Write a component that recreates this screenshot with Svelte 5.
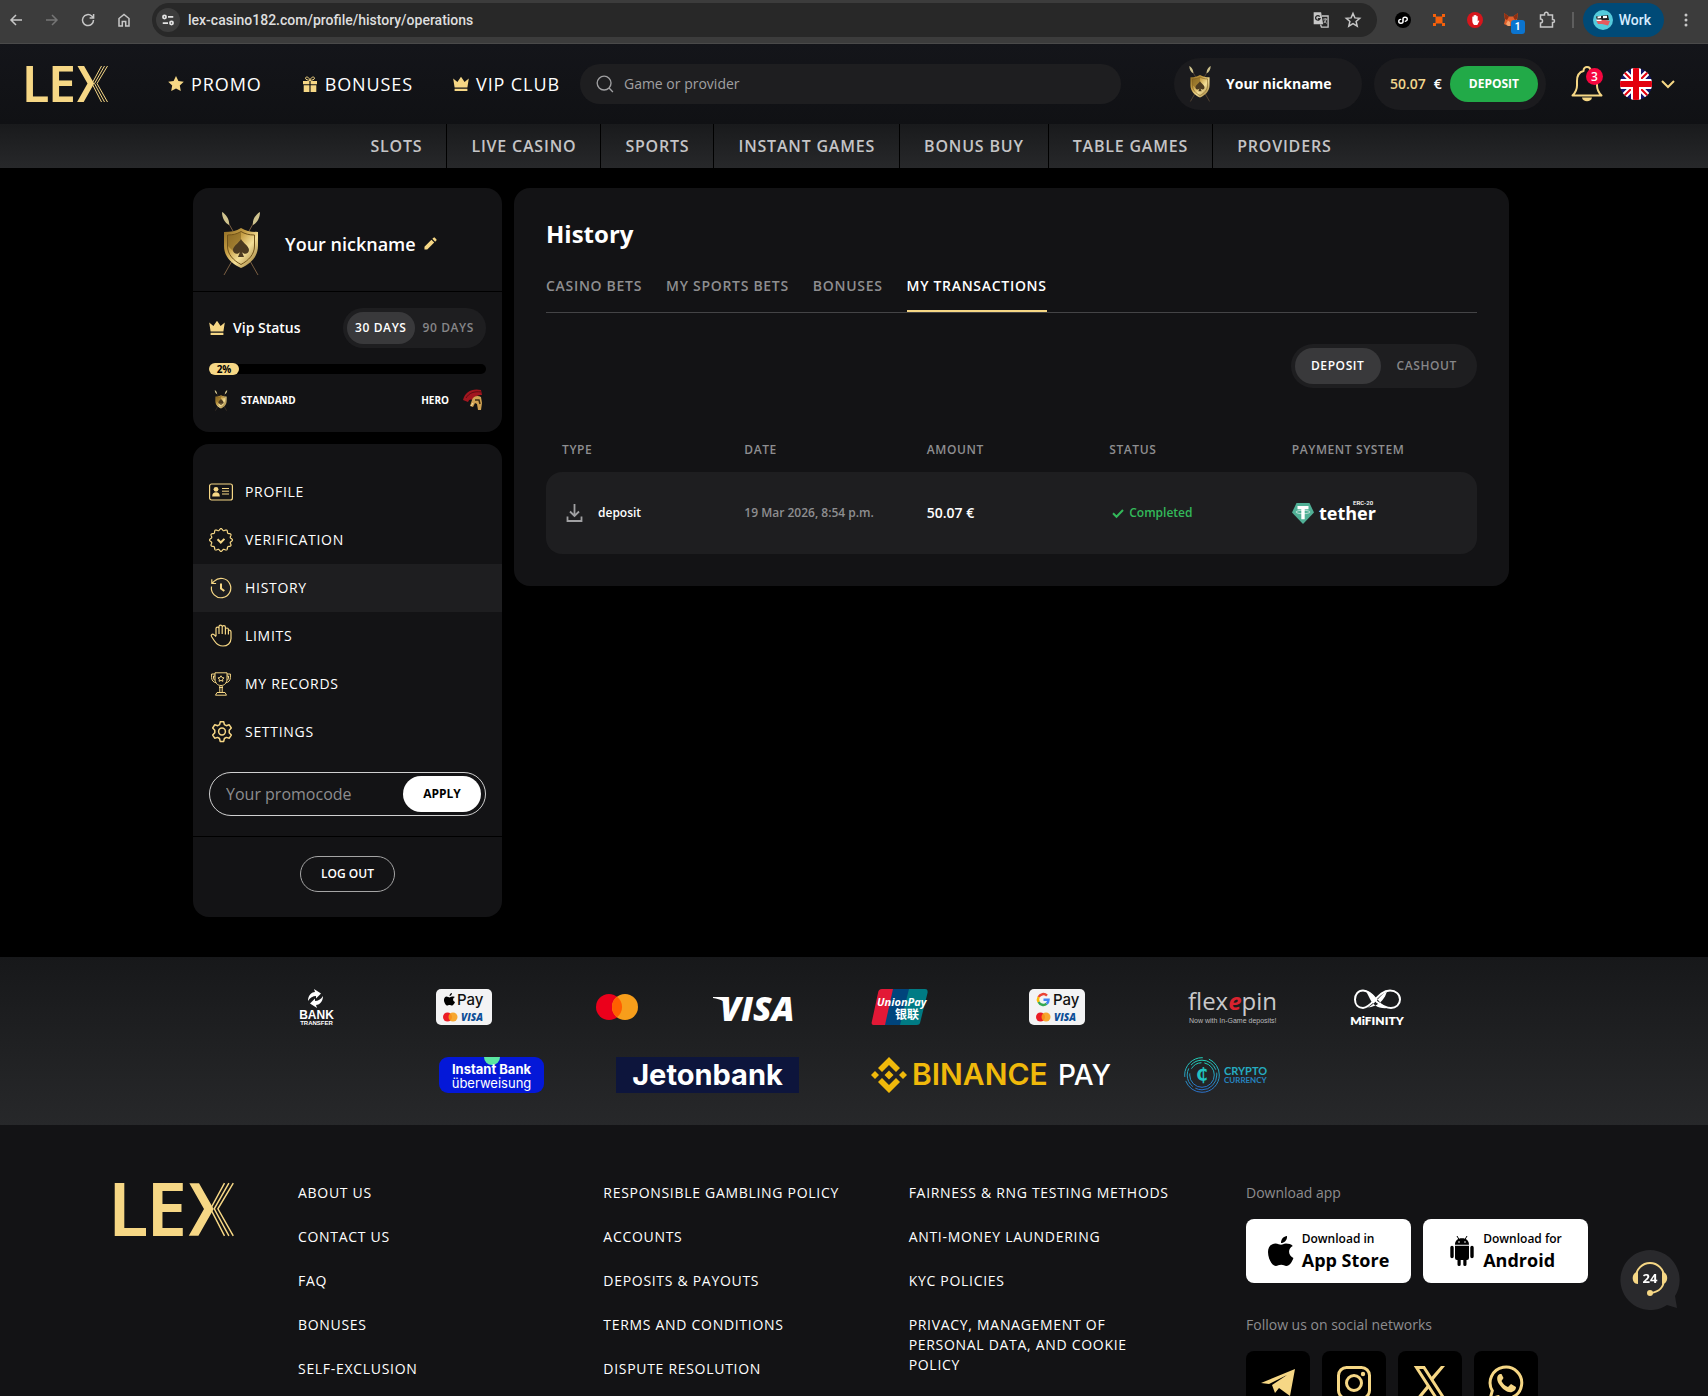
<script>
  const topLinks = [
    { icon: 'star', label: 'PROMO' },
    { icon: 'gift', label: 'BONUSES' },
    { icon: 'crown', label: 'VIP CLUB' }
  ];
  const categories = ['SLOTS', 'LIVE CASINO', 'SPORTS', 'INSTANT GAMES', 'BONUS BUY', 'TABLE GAMES', 'PROVIDERS'];
  const menu = [
    { icon: 'card', label: 'PROFILE' },
    { icon: 'badge', label: 'VERIFICATION' },
    { icon: 'history', label: 'HISTORY' },
    { icon: 'hand', label: 'LIMITS' },
    { icon: 'trophy', label: 'MY RECORDS' },
    { icon: 'gear', label: 'SETTINGS' }
  ];
  const tabs = ['CASINO BETS', 'MY SPORTS BETS', 'BONUSES', 'MY TRANSACTIONS'];
  const footerLinks = [
    ['ABOUT US', 'CONTACT US', 'FAQ', 'BONUSES', 'SELF-EXCLUSION'],
    ['RESPONSIBLE GAMBLING POLICY', 'ACCOUNTS', 'DEPOSITS & PAYOUTS', 'TERMS AND CONDITIONS', 'DISPUTE RESOLUTION'],
    ['FAIRNESS & RNG TESTING METHODS', 'ANTI-MONEY LAUNDERING', 'KYC POLICIES', 'PRIVACY, MANAGEMENT OF PERSONAL DATA, AND COOKIE POLICY']
  ];
  let page = $state('HISTORY');
  let tab = $state('MY TRANSACTIONS');
  let period = $state('30 DAYS');
  let kind = $state('DEPOSIT');
  let vipProgress = $state(2);

  // Scalloped outline of the verification badge.
  function wave(cx, cy, r, depth, lobes) {
    const pts = [];
    for (let i = 0; i <= 180; i++) {
      const a = (i / 180) * Math.PI * 2;
      const rr = r + depth * Math.cos(a * lobes + Math.PI);
      pts.push((cx + rr * Math.sin(a)).toFixed(2) + ' ' + (cy - rr * Math.cos(a)).toFixed(2));
    }
    return 'M' + pts.join('L') + 'Z';
  }
  const badgePath = wave(12, 12, 10.5, -0.9, 12);
</script>

{#snippet logo(cls)}
  <svg class={cls} viewBox="0 0 82 36" role="img" aria-label="LEX">
    <text x="-4" y="36" class="logo-text">L</text>
    <text x="22" y="36" class="logo-text">E</text>
    <path class="gold" d="M51.500 0h6.600l10 17.600-10.400 18.400h-6.600l10.400-18.400z" />
    <g class="gold-line">
      <path d="M75.500 0 66 17.500 75.500 36" />
      <path d="M78.500 0 68.500 17.500 78.500 36" />
      <path d="M81.500 0 71 17.500 81.500 36" />
    </g>
  </svg>
{/snippet}

{#snippet shield(cls)}
  <svg class={cls} viewBox="0 0 40 64" aria-hidden="true">
    <defs>
      <linearGradient id="shieldGold" x1="0" y1="0" x2="1" y2="1">
        <stop offset="0" stop-color="#8d6a22" />
        <stop offset="0.35" stop-color="#c79f45" />
        <stop offset="0.6" stop-color="#f4df98" />
        <stop offset="1" stop-color="#8a6722" />
      </linearGradient>
    </defs>
    <path d="M4 5 37 63M36 5 3 63" stroke="#7a5f42" stroke-width="1" />
    <path d="M1 0c4 2 8 8 7 13C4 11 1 6 1 0zM39 0c-4 2-8 8-7 13 4-2 7-7 7-13z" fill="#cfc38e" />
    <path d="M20 16c5 3 10 4 17 4v14c0 11-8 18-17 22C11 52 3 45 3 34V20c7 0 12-1 17-4z" fill="url(#shieldGold)" />
    <path d="M20 19.500c4 2.500 8 3.500 13.500 3.500v11c0 8.500-6 14.500-13.500 18.500C12.500 48.500 6.500 42.500 6.500 34V23c5.500 0 9.500-1 13.500-3.500z" fill="none" stroke="#6f5119" stroke-width="1" />
    <path d="M20 20v9l-7 11-6-6V23c5 0 9-1 13-3z" fill="#7c5c1c" opacity="0.550" />
    <path d="M20 27c2 4 8 7 8 11 0 4-5 5-7 2l2 5h-6l2-5c-2 3-7 2-7-2 0-4 6-7 8-11z" fill="#4c3a20" />
  </svg>
{/snippet}

{#snippet icon(name)}
  {#if name === 'star'}
    <svg class="ic16" viewBox="0 0 16 16" aria-hidden="true"><path class="gold" d="m8 0 2.400 5 5.400.700-4 3.900 1 5.500L8 12.500 3.200 15.100l1-5.500-4-3.900L5.600 5z" /></svg>
  {:else if name === 'gift'}
    <svg class="ic16" viewBox="0 0 16 16" aria-hidden="true"><path class="gold" d="M1 5h6.400v3.300H1zM8.600 5H15v3.300H8.600zM1.700 9.200h5.700V16H1.700zM8.600 9.200h5.700V16H8.600z" /><path class="gold-line" d="M8 4.500C6 4 3.500 3.800 3.500 2.200 3.500.500 7 .300 8 4.500c1-4.200 4.500-4 4.500-2.300C12.500 3.800 10 4 8 4.500z" /></svg>
  {:else if name === 'crown'}
    <svg class="ic16" viewBox="0 0 16 16" aria-hidden="true"><path class="gold" d="M.200 2.600 4.400 6 8 .800 11.600 6l4.200-3.400-1.400 8.800H1.600zM1.600 12.700h12.800V15H1.600z" /></svg>
  {:else if name === 'card'}
    <svg class="ic24" viewBox="0 0 24 24" aria-hidden="true"><rect class="gold-line menu-line" x=".600" y="4" width="22.800" height="16" rx="2" /><circle class="gold" cx="7" cy="9.300" r="2.400" /><path class="gold" d="M3.200 16.500c0-3 1.500-4.300 3.800-4.300s3.800 1.300 3.800 4.300z" /><path class="gold-line" d="M13 8.500h7M13 11.200h7M13 14h7" /></svg>
  {:else if name === 'badge'}
    <svg class="ic24" viewBox="0 0 24 24" aria-hidden="true"><path class="gold-line menu-line" d={badgePath} /><path class="gold-line thick" d="m8.500 11.200 3.300 3.300 3.600-3.600" /></svg>
  {:else if name === 'history'}
    <svg class="ic24" viewBox="0 0 24 24" aria-hidden="true"><path class="gold-line menu-line" d="M2.500 10.500a9.700 9.700 0 1 0 2.800-5.400L3 7.300M2.800 3.200v4.300h4.300" /><path class="gold-line thick" d="M12 7.500v5l3.300 2.500" /></svg>
  {:else if name === 'hand'}
    <svg class="ic24" viewBox="0 0 24 24" aria-hidden="true"><path class="gold-line menu-line" d="M7 12V4.600a1.500 1.500 0 0 1 3 0V10M10 10V2.800a1.500 1.500 0 0 1 3.200 0V10M13.200 10V3.200a1.500 1.500 0 0 1 3.200 0V10.500M16.400 10.500V5.500a1.500 1.500 0 0 1 3 0v5M19.400 6.500c1.600-.8 2.600.1 2.600 1.400v6.600c0 4.500-3.500 7.500-8 7.500-4 0-6.500-2-8.500-5l-3-4.500c-.9-1.500.9-3.200 2.500-1.800L7 12.700" /></svg>
  {:else if name === 'trophy'}
    <svg class="ic24" viewBox="0 0 24 24" aria-hidden="true"><path class="gold-line" d="M6 .800h12V7c0 4-2.500 6.500-6 6.500S6 11 6 7zM6 2H2.600v3.500c0 3 2 5 4.700 5.300M18 2h3.400v3.500c0 3-2 5-4.700 5.300M6 4H4.500v2c0 1 .7 2 1.700 2.400M18 4h1.500v2c0 1-.7 2-1.700 2.400M10.800 14v6.500M13.200 14v6.500M10 15.500h4M8 20.500h8l1.500 2.700h-11z" /><path class="gold-line" d="m12 3.800 1 1.800 2 .3-1.400 1.400.3 2-1.900-.9-1.900.9.300-2L9 5.900l2-.3z" /></svg>
  {:else if name === 'gear'}
    <svg class="ic24" viewBox="0 0 24 24" aria-hidden="true"><path class="gold-line gear" d="M11.300 1.700h3.400l.7 2.900 1.900 1.100 2.800-1 2.200 3.300-2.100 2.200v2.600l2.100 2.300-2 3.100-3-.8-1.900 1.100-.7 2.900h-3.500l-.7-2.900-1.900-1.100-2.900.8-2-3.100 2.100-2.300v-2.600L3.700 8l2.100-3.300 2.900 1 1.900-1.100z" /><circle class="gold-line gear" cx="13" cy="11.500" r="3.400" /></svg>
  {/if}
{/snippet}

<div class="window">
  <div class="browser">
    <button class="tool" aria-label="Back"><svg viewBox="0 0 16 16"><path d="M14 8H3M8 3 3 8l5 5" /></svg></button>
    <button class="tool dim" aria-label="Forward"><svg viewBox="0 0 16 16"><path d="M2 8h11M8 3l5 5-5 5" /></svg></button>
    <button class="tool" aria-label="Reload"><svg viewBox="0 0 16 16"><path d="M13.500 8A5.500 5.500 0 1 1 11.700 4l1.700 1.600M13.600 2v4h-4" /></svg></button>
    <button class="tool" aria-label="Home"><svg viewBox="0 0 16 16"><path d="M3 14V6.500l5-4 5 4V14H9.700V9.500H6.300V14z" /></svg></button>
    <div class="address">
      <span class="site"><svg viewBox="0 0 16 16" aria-hidden="true"><circle cx="4" cy="4.500" r="1.800" /><path d="M8 4.500h6M2 11.500h6" /><circle cx="12" cy="11.500" r="1.800" /></svg></span>
      <input aria-label="Address" value="lex-casino182.com/profile/history/operations" />
      <button class="tool" aria-label="Translate"><svg viewBox="0 0 18 18"><path fill="#c7c7c7" d="M1.500 1h7l2 12h-9z" /><path d="M10 4.500h7V17H9.500l-1-3" /><path class="cut" d="M7.500 5.200a2.500 2.500 0 1 0 .3 2.300H5.500" /><path class="fine" d="M11.500 8h4.500M13.700 7v1M15 8c-.5 2-1.500 3.500-3 4.500M12.500 9.500c.7 1.500 1.700 2.500 3 3.200" /></svg></button>
      <button class="tool" aria-label="Bookmark"><svg viewBox="0 0 16 16"><path d="m8 1.500 1.900 4.400 4.800.4-3.600 3.200 1.100 4.700L8 11.700l-4.200 2.500 1.100-4.700L1.300 6.300l4.800-.4z" /></svg></button>
    </div>
    <div class="extensions">
      <svg class="ext" viewBox="0 0 16 16" aria-hidden="true"><circle cx="8" cy="8" r="8" fill="#000" /><path d="M7.900 9.900V7.300q0-2 2-2h.4a1.900 1.900 0 0 1 0 3.900M8.100 6.700v2.600q0 2-2 2h-.4a1.900 1.900 0 0 1 0-3.900" fill="none" stroke="#fff" stroke-width="1.400" stroke-linecap="round" /></svg>
      <svg class="ext" viewBox="0 0 16 16" aria-hidden="true"><path d="M2 2h3v3H2zM11 2h3v3h-3zM2 11h3v3H2zM11 11h3v3h-3zM5 4.500h6l.5.500v6l-.5.500H5l-.5-.5V5z" fill="#f6600b" /></svg>
      <svg class="ext" viewBox="0 0 16 16" aria-hidden="true"><circle cx="8" cy="8" r="8" fill="#d6161c" /><path d="M5.300 9V4.800q.700-.8 1.300 0V3.500q.700-.8 1.400 0v-.2q.7-.8 1.400 0v1q.7-.7 1.300 0v5.200l.8-.9q.800-.3.800.5L10.300 13H7q-1.700-1.500-1.700-4z" fill="#fff" /></svg>
      <span class="fox">
        <svg class="ext" viewBox="0 0 16 16" aria-hidden="true"><path d="M1 1l5 3.500h4L15 1l-1 7 1 4-4 2H5l-4-2 1-4z" fill="#e2602c" /><path d="M1 1l5 3.500L4 8 2 7zM15 1l-5 3.500L12 8l2-1z" fill="#8d2f12" /><path d="M5 8.500 7 10v4H5l-2-2z" fill="#f4a46f" /></svg>
        <span class="count">1</span>
      </span>
      <svg class="ext line" viewBox="0 0 16 16" aria-hidden="true"><path d="M1.500 3h4V2a1.800 1.800 0 0 1 3.600 0v1H13.500v4.500h.5a1.500 1.500 0 0 1 0 3h-.5V15h-12v-4a2 2 0 0 0 0-4z" /></svg>
    </div>
    <span class="divider"></span>
    <button class="profile">
      <svg viewBox="0 0 20 20" aria-hidden="true"><circle cx="10" cy="10" r="10" fill="#54cbdc" /><path d="M3 6.500 15 5l1 5H4z" fill="#222" /><path d="M4.500 6.500 8 6v2l-3.500.500zM10 6l4-.3V8l-4 .3z" fill="#fff" /><path d="M3 10h9l5 1-2 4.500-6-1.500H5z" fill="#e65a5f" /><path d="M3.500 9.500h5V11h-5z" fill="#fff" /></svg>
      Work
    </button>
    <button class="tool dots" aria-label="Menu"><svg viewBox="0 0 16 16"><circle cx="8" cy="3" r="1.500" /><circle cx="8" cy="8" r="1.500" /><circle cx="8" cy="13" r="1.500" /></svg></button>
  </div>

  <header>
    <a class="home" href="#home">{@render logo('logo-small')}</a>
    <nav class="top-nav" aria-label="Main">
      {#each topLinks as l}
        <a href="#{l.icon}">{@render icon(l.icon)}{l.label}</a>
      {/each}
    </nav>
    <label class="search">
      <svg viewBox="0 0 20 20" aria-hidden="true"><circle cx="9" cy="9" r="7.700" /><path d="m14.500 14.500 4.300 4.300" /></svg>
      <input type="search" placeholder="Game or provider" aria-label="Search games" />
    </label>
    <a class="nick" href="#profile">{@render shield('shield-s')}Your nickname</a>
    <div class="balance">
      <span class="sum">50.07</span><span>€</span>
      <button>DEPOSIT</button>
    </div>
    <button class="bell" aria-label="Notifications">
      <svg viewBox="0 0 32 36" aria-hidden="true"><path class="gold-line bell-line" d="M1.500 29.500c3-3 4.500-5 4.500-10v-4.500C6 9.500 8.500 6 12.500 5c0-5.300 7-5.300 7 0C23.500 6 26 9.500 26 15v4.500c0 5 1.500 7 4.500 10z" /><path class="gold" d="M11 31.500h10c-.5 5-9.500 5-10 0z" /></svg>
      <span>3</span>
    </button>
    <button class="lang" aria-label="Language">
      <svg class="flag" viewBox="0 0 32 32" aria-hidden="true">
        <defs><clipPath id="round"><circle cx="16" cy="16" r="16" /></clipPath></defs>
        <g clip-path="url(#round)"><path fill="#13156b" d="M0 0h32v32H0z" /><path d="M0 0l32 32M32 0 0 32" stroke="#fff" stroke-width="6" /><path d="M0 0l32 32M32 0 0 32" stroke="#e3000f" stroke-width="2" /><path d="M16 0v32M0 16h32" stroke="#fff" stroke-width="10" /><path d="M16 0v32M0 16h32" stroke="#e3000f" stroke-width="6" /></g>
      </svg>
      <svg class="chev" viewBox="0 0 14 8" aria-hidden="true"><path class="gold-line thick" d="m1 1 6 6 6-6" /></svg>
    </button>
  </header>

  <nav class="categories" aria-label="Games">
    {#each categories as c}<a href="#{c}">{c}</a>{/each}
  </nav>

  <main>
    <aside>
      <section class="card">
        <div class="who">
          {@render shield('shield-l')}
          <span>Your nickname</span>
          <button aria-label="Edit nickname"><svg viewBox="0 0 14 14" aria-hidden="true"><path class="gold" d="M.500 13.500v-3L8 3l3 3-7.500 7.500zM9 2l1.300-1.300q.7-.6 1.400 0l1.600 1.600q.6.700 0 1.400L12 5z" /></svg></button>
        </div>
        <div class="vip">
          <div class="vip-head">
            {@render icon('crown')}
            <span>Vip Status</span>
            <div class="toggle small">
              {#each ['30 DAYS', '90 DAYS'] as p}
                <button aria-pressed={period === p} onclick={() => (period = p)}>{p}</button>
              {/each}
            </div>
          </div>
          <div class="bar" role="progressbar" aria-valuenow={vipProgress} aria-valuemin="0" aria-valuemax="100" aria-label="Vip status">
            <div class="fill" style="width: {vipProgress}%">{vipProgress}%</div>
          </div>
          <div class="levels">
            {@render shield('shield-xs')}
            <span>STANDARD</span>
            <span class="next">HERO</span>
            <svg class="helmet" viewBox="0 0 20 22" aria-hidden="true"><path d="M0 11C2 3 9-1 18 1l1 5c-5 0-7 2-9 5-2-1-4-1-5 2z" fill="#a3161f" /><path d="M3 9C6 4 11 2 18 3" fill="none" stroke="#5d0b12" /><path d="M9 11c1-4 6-5 9-3l1 6-1 7h-3l-1-6-2-1-2 4-3-1z" fill="#d0a252" /><path d="m12 11 4 0 1 4" fill="none" stroke="#3d2b10" stroke-width="1.500" /><path d="m8 17 2-3" stroke="#f5e2a6" /></svg>
          </div>
        </div>
      </section>

      <section class="card">
        <nav class="menu" aria-label="Account">
          {#each menu as m}
            <a href="#{m.icon}" class:active={page === m.label} onclick={() => (page = m.label)}>{@render icon(m.icon)}{m.label}</a>
          {/each}
        </nav>
        <form class="promo" onsubmit={(e) => e.preventDefault()}>
          <input placeholder="Your promocode" aria-label="Your promocode" />
          <button>APPLY</button>
        </form>
        <div class="out"><button>LOG OUT</button></div>
      </section>
    </aside>

    <section class="card content">
      <h1>History</h1>
      <div class="tabs" role="tablist">
        {#each tabs as t}
          <button role="tab" aria-selected={tab === t} onclick={() => (tab = t)}>{t}</button>
        {/each}
      </div>
      <div class="toggle">
        {#each ['DEPOSIT', 'CASHOUT'] as k}
          <button aria-pressed={kind === k} onclick={() => (kind = k)}>{k}</button>
        {/each}
      </div>
      <table>
        <thead>
          <tr><th class="first">TYPE</th><th>DATE</th><th>AMOUNT</th><th>STATUS</th><th class="last">PAYMENT SYSTEM</th></tr>
        </thead>
        <tbody>
          <tr>
            <td>
              <span class="type"><svg viewBox="0 0 16 18" aria-hidden="true"><path d="M8 0v12M3.500 7.500 8 12l4.500-4.500M1 12.500V17h14v-4.500" /></svg>deposit</span>
            </td>
            <td class="muted">19 Mar 2026, 8:54 p.m.</td>
            <td class="amount">50.07 €</td>
            <td><span class="status"><svg viewBox="0 0 12 9" aria-hidden="true"><path d="m1 4.200 3.500 3.500L11 1" /></svg>Completed</span></td>
            <td>
              <svg class="tether" viewBox="0 0 84 26" role="img" aria-label="tether ERC-20">
                <path d="M4.500 3h13L22 12.500 11 24 0 12.500z" fill="#50af95" />
                <path d="M5.500 6h11v3.200h-3.800v10H9.300v-10H5.500z" fill="#fff" />
                <ellipse cx="11" cy="12" rx="7" ry="1.700" fill="none" stroke="#fff" stroke-width=".600" />
                <text x="27" y="20" class="t-name">tether</text>
                <text x="61" y="5" class="t-erc">ERC-20</text>
              </svg>
            </td>
          </tr>
        </tbody>
      </table>
    </section>
  </main>

  <section class="payments" aria-label="Payment methods">
    <div>
      <svg width="37" height="36" viewBox="0 0 37 36"><path fill="#fff" d="M10 12c0-6 4-9 7-9l-1-3 7 4.500-5 5V7c-3 0-6 1.500-8 5zM25 7c0 6-4 9-7 9l1 3-7-4.500 5-5V12c3 0 6-1.500 8-5z" /><text x="18.500" y="30" text-anchor="middle" class="b-bank">BANK</text><text x="18.500" y="36" text-anchor="middle" class="b-trans">TRANSFER</text></svg>
      <svg width="114" height="36" viewBox="0 0 114 36"><rect x="29" width="56" height="36" rx="5" fill="#f3f3f4" /><path transform="translate(37 4) scale(.5)" d="M16 7c-2 0-4 2-5 2S7 7 5 7C0 8-1 14 1 19c1 3 3 6 5 6s3-1 5-1 3 1 5 1 5-4 6-7c-5-2-5-8 0-10-2-2-4-1-6-1zM11 6c0-3 2-6 5-6 0 3-2 6-5 6z" /><text x="50" y="16" class="pay">Pay</text><circle cx="40.500" cy="28" r="4.500" fill="#eb1c26" /><circle cx="46" cy="28" r="4.500" fill="#f79e1b" opacity=".900" /><text x="54" y="32" class="visa-s">VISA</text></svg>
      <svg width="48" height="36" viewBox="0 0 48 36"><circle cx="16" cy="18" r="13" fill="#eb001b" /><circle cx="32" cy="18" r="13" fill="#f79e1b" /><path d="M24 7.700a13 13 0 0 1 0 20.600 13 13 0 0 1 0-20.600z" fill="#ff5f00" /></svg>
      <svg width="80" height="36" viewBox="0 0 80 36"><path d="M0 8h10l4 3 2 7c-3-5-8-8-16-9z" fill="#fff" /><text x="7" y="32" class="visa">VISA</text></svg>
      <svg width="69" height="36" viewBox="0 0 69 36"><path d="M17 0h14l-8 36H10c-3 0-4-1-3-4l6-28c.5-3 1.500-4 4-4z" fill="#e21836" /><path d="M28 0h18l-8 36H20z" fill="#00447c" /><path d="M44 0h16c2 0 3 1 2.500 4l-7 28c-.5 3-1.500 4-4 4H35z" fill="#007b84" /><text x="12" y="17" class="union">UnionPay</text><text x="30" y="30" class="union-cn">银联</text></svg>
      <svg width="102" height="36" viewBox="0 0 102 36"><rect x="23" width="56" height="36" rx="5" fill="#f3f3f4" /><g fill="none" stroke-width="2.500"><path d="M41 6.600A5.300 5.300 0 0 0 32.600 8" stroke="#ea4335" /><path d="M32.600 8a5.300 5.300 0 0 0 0 5" stroke="#fbbc04" /><path d="M32.600 13a5.300 5.300 0 0 0 8 1.800" stroke="#34a853" /><path d="M40.600 14.800c1.300-1 1.900-2.300 1.900-4H37.500" stroke="#4285f4" /></g><text x="47" y="16" class="pay">Pay</text><circle cx="34.500" cy="28" r="4.500" fill="#eb1c26" /><circle cx="40" cy="28" r="4.500" fill="#f79e1b" opacity=".900" /><text x="48" y="32" class="visa-s">VISA</text></svg>
      <svg width="99" height="36" viewBox="0 0 99 36"><text x="8" y="21" class="flexe">flex<tspan class="red">e</tspan>pin</text><text x="9" y="34" class="flexe-sub">Now with In-Game deposits!</text></svg>
      <svg width="54" height="36" viewBox="0 0 54 36"><path d="M26 13C21 5 17 1.500 12 1.500c-5 0-8 4-8 9s3 8.500 8 8.500c9 0 15-17.500 27-17.500 6 0 10 4 10 9s-4 8.500-9 8.500c-6 0-10-3-14-6z" fill="none" stroke="#fff" stroke-width="2" /><path d="M15 2c8 0 13 14 22 17-10 1-15-3-18-9zM36 2.500c-6 2-12 13-19 16 9-1 14-6 17-11z" fill="#fff" /><text x="26" y="36" text-anchor="middle" class="mif">MiFINITY</text></svg>
    </div>
    <div>
      <svg width="105" height="36" viewBox="0 0 105 36"><rect width="105" height="36" rx="9" fill="#0418d8" /><path d="M45 0h16a8 8 0 0 1-16 0z" fill="#5be7a2" /><text x="52.500" y="17" text-anchor="middle" class="inst">Instant Bank</text><text x="52.500" y="31" text-anchor="middle" class="uber">überweisung</text></svg>
      <svg width="183" height="36" viewBox="0 0 183 36"><path fill="#0d153c" d="M0 0h183v36H0z" /><text x="91.500" y="28" text-anchor="middle" class="jeton">Jetonbank</text></svg>
      <svg width="241" height="36" viewBox="0 0 241 36"><g fill="#f0b90b"><path d="m18 0 11 11-4 4-7-7-7 7-4-4zM18 36 7 25l4-4 7 7 7-7 4 4zM4 14l4 4-4 4-4-4zM32 14l4 4-4 4-4-4zM18 13.500l4.500 4.500-4.500 4.500-4.500-4.500z" /><text x="41" y="28" class="bin">BINANCE</text></g><text x="187" y="28" class="binpay">PAY</text></svg>
      <svg width="80" height="36" viewBox="0 0 80 36"><defs><linearGradient id="cy" x1="0" y1="0" x2="0" y2="1"><stop offset="0" stop-color="#22d0b8" /><stop offset="1" stop-color="#2a6fc8" /></linearGradient></defs><g fill="none" stroke="url(#cy)"><circle cx="18" cy="18" r="17.300" stroke-dasharray="48 4 30 6" /><circle cx="18" cy="18" r="14.800" stroke-dasharray="30 3 20 4" /><circle cx="18" cy="18" r="12.300" stroke-dasharray="40 5 12 3" /></g><text x="18" y="24" text-anchor="middle" class="coin">₵</text><text x="40" y="18" class="cr1">CRYPTO</text><text x="40" y="26" class="cr2">CURRENCY</text></svg>
    </div>
  </section>

  <footer>
    <a class="home" href="#top">{@render logo('logo-big')}</a>
    <div class="cols">
      {#each footerLinks as col}
        <ul>
          {#each col as l}<li><a href="#footer">{l}</a></li>{/each}
        </ul>
      {/each}
    </div>
    <div class="apps">
      <p>Download app</p>
      <div class="stores">
        <a href="#ios"><svg viewBox="0 0 26 30" aria-hidden="true"><path d="M18 7.500c-2.500 0-3.500 1.300-5 1.300S10 7.500 7.500 7.500C3 7.500 0 11 0 16c0 6.500 4 14 7.800 14 2 0 2.900-1.200 5.400-1.200s3.200 1.200 5.200 1.200c3.100 0 5.800-4.300 7-8-5.500-2.200-5.800-9.500-.6-12-1.500-1.800-4.300-2.500-6.800-2.500zM13 7c0-4 2.700-6.700 6-7 .4 3.700-2.500 7-6 7z" /></svg><span>Download in<strong>App Store</strong></span></a>
        <a href="#android"><svg viewBox="0 0 24 30" aria-hidden="true"><path d="M5 8.700C5 5 7.500 2.300 12 2.300S19 5 19 8.700zM5 9.700h14V22a2 2 0 0 1-2 2h-.500v4.500a1.600 1.600 0 0 1-3.200 0V24h-2.600v4.500a1.600 1.600 0 0 1-3.200 0V24H7a2 2 0 0 1-2-2zM.300 11.500a1.700 1.700 0 0 1 3.400 0v9a1.700 1.700 0 0 1-3.400 0zM20.300 11.500a1.700 1.700 0 0 1 3.400 0v9a1.700 1.700 0 0 1-3.400 0z" /><path d="M7 0l2 3.500M17 0l-2 3.500" stroke="#000" /><circle cx="9" cy="6" r=".800" fill="#fff" /><circle cx="15" cy="6" r=".800" fill="#fff" /></svg><span>Download for<strong>Android</strong></span></a>
      </div>
      <p>Follow us on social networks</p>
      <div class="social">
        <a href="#telegram" aria-label="Telegram"><svg viewBox="0 0 36 36"><path class="gold" d="M1 18 35 4l-5 27-11-8-4 5-3-8 15-10L9 19z" /></svg></a>
        <a href="#instagram" aria-label="Instagram"><svg viewBox="0 0 36 36"><g class="gold-line social-line"><rect x="2.500" y="2.500" width="31" height="31" rx="8" /><circle cx="18" cy="18" r="7.500" /></g><circle class="gold" cx="27" cy="9" r="2.200" /></svg></a>
        <a href="#x" aria-label="X"><svg viewBox="0 0 36 36"><path class="gold-line social-line" d="M4.500 2.500h7.500l20 31h-7.500z" /><path class="gold" d="M29 1h4L20.500 16l-2-3zM3 35h4l11-13-2-3z" /></svg></a>
        <a href="#whatsapp" aria-label="WhatsApp"><svg viewBox="0 0 36 36"><path class="gold-line social-line" d="m2 34 2.300-8.200A15.800 15.800 0 1 1 10.200 31.600z" /><path class="gold" d="M12 9c-3 1-4 5-1 10 4 6 9 9 13 8 3-1 4-3 4-5l-5-3-3 3c-3-1-5-3-6.500-6l2-3-2-4z" /></svg></a>
      </div>
    </div>
  </footer>

  <button class="chat" aria-label="Support 24">
    <svg viewBox="0 0 60 60" aria-hidden="true">
      <path d="M30 0a30 30 0 0 1 25 46l2 12-10-3A30 30 0 1 1 30 0z" fill="#29292c" />
      <path class="gold-line thick" d="M16 27a14 14 0 0 1 28 0v2c0 8-5 13-13 14" />
      <path class="gold" d="M18 22v12c-7 0-7-12 0-12zM42 22v12c7 0 7-12 0-12z" /><circle class="gold" cx="30" cy="43" r="3" />
      <text x="30" y="33" text-anchor="middle">24</text>
    </svg>
  </button>
</div>

<style>
  :global(body) { margin: 0; background: #000; }
  .window { height: 100vh; overflow: hidden; display: flex; flex-direction: column; color: #fff; font: 14px/20px 'Open Sans', 'Noto Sans', sans-serif; }
  .window > :global(*) { flex-shrink: 0; }
  * { box-sizing: border-box; }
  a { color: inherit; text-decoration: none; }
  button { font: inherit; letter-spacing: inherit; color: inherit; background: none; border: 0; padding: 0; margin: 0; cursor: pointer; }
  input { font: inherit; color: inherit; background: none; border: 0; outline: 0; padding: 0; min-width: 0; }
  svg { display: block; overflow: visible; flex-shrink: 0; }
  .gold { fill: #f6d785; }
  .gold-line { fill: none; stroke: #f6d785; stroke-width: 1; }
  .menu-line { stroke-width: 1.2; }
  .thick { stroke-width: 2; }
  .ic16 { width: 16px; height: 16px; }
  .ic24 { width: 24px; height: 24px; }
  .gear { stroke-width: 1.5; stroke-linejoin: round; }

  .browser { display: flex; align-items: center; height: 44px; padding: 0 14px 4px 8px; background: #3c3c3c; border-bottom: 1px solid #4a4a4a; font: 500 14px/20px Roboto, sans-serif; }
  .tool { margin-right: 20px; }
  .tool svg, .line { width: 16px; height: 16px; fill: none; stroke: #c7c7c7; stroke-width: 1.5; }
  .tool .cut { stroke: #282828; }
  .tool .fine { stroke-width: 1; }
  .dim svg { stroke: #757575; }
  .tool.dots { margin: 0 0 0 14px; }
  .dots svg { fill: #c7c7c7; stroke: none; }
  .address { flex: 1; display: flex; align-items: center; height: 34px; margin-right: 18px; padding: 0 0 0 4px; border-radius: 17px; background: #282828; }
  .address .tool { margin-right: 16px; }
  .address input { flex: 1; color: #dedede; font: 500 14px/20px Roboto, sans-serif; }
  .site { display: grid; place-items: center; width: 24px; height: 24px; margin-right: 8px; border-radius: 50%; background: #3c3c3c; }
  .site svg { width: 14px; height: 14px; fill: none; stroke: #e3e3e3; stroke-width: 2; }
  .extensions { display: flex; gap: 20px; }
  .ext { width: 16px; height: 16px; }
  .fox { position: relative; }
  .count { position: absolute; left: 8px; top: 8px; width: 14px; height: 14px; border-radius: 3px; background: #0b74cf; font: 700 10px/14px Roboto, sans-serif; text-align: center; }
  .divider { width: 2px; height: 16px; margin: 0 9px 0 17px; background: #5e5e5e; }
  .profile { display: flex; align-items: center; gap: 6px; height: 34px; padding: 0 13px 0 10px; border-radius: 17px; background: #004a77; color: #d5ecff; }
  .profile svg { width: 20px; height: 20px; }

  header { display: flex; align-items: center; height: 80px; padding: 0 33px 0 26px; background: linear-gradient(#14151a, #101114); }
  .logo-small { width: 82px; height: 36px; }
  .logo-text { font: 600 50px 'Noto Sans', sans-serif; fill: #f6d785; }
  .top-nav { display: flex; gap: 40px; margin-left: 60px; font-size: 18px; line-height: 24px; letter-spacing: 0.05em; }
  .top-nav a { display: flex; align-items: center; gap: 7px; white-space: nowrap; }
  .search { flex: 1; display: flex; align-items: center; gap: 10px; height: 40px; margin: 0 53px 0 20px; padding: 0 16px; border-radius: 20px; background: #1e1e20; color: #a0a0a2; }
  .search svg { width: 18px; height: 18px; fill: none; stroke: #a0a0a2; stroke-width: 1.5; }
  .search input { flex: 1; }
  .search input::placeholder { color: #a0a0a2; opacity: 1; }
  .nick { display: flex; align-items: center; gap: 14px; width: 188px; height: 52px; margin-right: 12px; padding-left: 14px; border-radius: 26px; background: #1b1b1e; font-weight: 700; }
  .shield-s { width: 24px; height: 36px; }
  .balance { display: flex; align-items: center; gap: 8px; height: 52px; width: 172px; padding: 0 8px 0 16px; border-radius: 26px; background: #1b1b1e; font-weight: 600; }
  .sum { color: #f1d58d; }
  .balance button { margin-left: auto; width: 91px; height: 36px; border-radius: 18px; background: #22aa48; font-size: 12px; font-weight: 700; }
  .bell { position: relative; margin: 0 17px 0 25px; }
  .bell svg { width: 32px; height: 36px; }
  .bell-line { stroke-width: 2; stroke-linejoin: round; }
  .bell span { position: absolute; left: 15px; top: 2px; width: 17px; height: 17px; border-radius: 50%; background: #f5063f; font-size: 12px; font-weight: 600; line-height: 17px; }
  .lang { display: flex; align-items: center; gap: 9px; }
  .flag { width: 32px; height: 32px; }
  .chev { width: 14px; height: 8px; }

  .categories { display: flex; justify-content: center; height: 44px; padding-right: 6px; background: linear-gradient(#191a1c, #27282a); font-size: 16px; font-weight: 600; letter-spacing: 0.05em; line-height: 44px; color: #c4c4c6; }
  .categories a { padding: 0 24px; }
  .categories a + a { border-left: 1px solid #000; }

  main { display: flex; align-items: flex-start; justify-content: center; gap: 12px; padding: 20px 6px 40px 0; background: #000; }
  aside { display: flex; flex-direction: column; gap: 12px; width: 309px; }
  .card { border-radius: 16px; background: #131315; overflow: hidden; }
  .who { display: flex; align-items: center; height: 104px; padding: 8px 28px 0; border-bottom: 1px solid #000; font-size: 18px; font-weight: 600; }
  .who span { margin: 0 8px 0 24px; }
  .shield-l { width: 40px; height: 64px; }
  .who button svg { width: 13px; height: 13px; }
  .vip { padding: 16px 16px 21px; }
  .vip-head { display: flex; align-items: center; gap: 8px; font-weight: 600; }
  .toggle { display: flex; padding: 4px; border-radius: 22px; background: #1e1e20; font-size: 12px; font-weight: 600; letter-spacing: 0.05em; color: #868688; }
  .toggle button { height: 36px; padding: 0 16px; border-radius: 18px; }
  .toggle button[aria-pressed='true'] { background: #39393b; color: #fff; }
  .toggle.small { margin-left: auto; }
  .toggle.small button { height: 32px; padding: 0 8px; }
  .bar { display: flex; align-items: center; height: 10px; margin: 16px 0 15px; border-radius: 5px; background: #000; }
  .fill { min-width: 30px; height: 12px; border-radius: 6px; background: #f6d785; color: #000; font-size: 10px; font-weight: 700; line-height: 12px; text-align: center; }
  .levels { display: flex; align-items: center; height: 22px; padding: 0 3px 0 5px; font-size: 10px; font-weight: 700; }
  .shield-xs { width: 14px; height: 21px; margin-right: 13px; }
  .next { margin: 0 14px 0 auto; }
  .helmet { width: 20px; height: 22px; }
  .menu { padding: 24px 0 16px; }
  .menu a { display: flex; align-items: center; gap: 12px; height: 48px; padding: 0 16px; letter-spacing: 0.05em; }
  .menu a.active { background: #1e1e20; }
  .promo { display: flex; height: 44px; margin: 0 16px 20px; padding: 3px 4px 3px 16px; border: 1px solid #d0d0d0; border-radius: 22px; }
  .promo input { flex: 1; font-size: 16px; }
  .promo input::placeholder { color: #8d8d8f; opacity: 1; }
  .promo button { width: 78px; border-radius: 18px; background: #fff; color: #000; font-size: 12px; font-weight: 700; }
  .out { display: grid; place-items: center; padding: 19px 0 25px; border-top: 1px solid #000; }
  .out button { height: 36px; padding: 0 20px; border: 1px solid #a5a5a5; border-radius: 18px; font-size: 12px; font-weight: 600; }

  .content { flex: 0 1 995px; padding: 32px; }
  h1 { margin: 0; font-size: 24px; line-height: 28px; font-weight: 700; }
  .tabs { display: flex; gap: 24px; margin-top: 24px; border-bottom: 1px solid #444446; }
  .tabs button { height: 40px; padding-bottom: 10px; border-bottom: 2px solid transparent; color: #8e8e90; font-weight: 600; letter-spacing: 0.05em; }
  .tabs button[aria-selected='true'] { border-color: #f6d785; color: #fff; }
  .content .toggle { width: max-content; margin: 31px 0 0 auto; }
  table { width: 100%; margin-top: 40px; border-collapse: separate; border-spacing: 0; table-layout: fixed; font-size: 12px; font-weight: 600; }
  th { width: 19.6%; height: 44px; padding: 0; text-align: left; font-weight: 600; letter-spacing: 0.05em; color: #8e8e90; }
  th.first { width: 21.3%; padding-left: 16px; }
  th.last { width: auto; }
  td { height: 82px; padding: 0; background: #1e1e20; }
  td:first-child { padding-left: 20px; border-radius: 16px 0 0 16px; }
  td:last-child { border-radius: 0 16px 16px 0; }
  .type { display: flex; align-items: center; gap: 15px; }
  .type svg { width: 17px; height: 18px; fill: none; stroke: #a0a0a2; stroke-width: 1.8; }
  .muted { color: #8e8e90; }
  .amount { font-size: 14px; }
  .status { display: flex; align-items: center; gap: 5px; padding-left: 3px; color: #33b95a; }
  .status svg { width: 12px; height: 9px; fill: none; stroke: #33b95a; stroke-width: 2; }
  .tether { width: 84px; height: 26px; }
  .t-name { font: 700 18px 'Open Sans', sans-serif; fill: #fff; }
  .t-erc { font: 600 6px Roboto, sans-serif; fill: #fff; }

  .payments { display: flex; flex-direction: column; gap: 32px; padding: 32px 6px 32px 0; background: linear-gradient(#17181a, #27282a); }
  .payments div { display: flex; justify-content: center; gap: 72px; }
  .b-bank { font: 700 12px 'Liberation Sans', sans-serif; fill: #fff; }
  .b-trans { font: 700 6px 'Liberation Sans', sans-serif; fill: #fff; }
  .pay { font: 500 15px Inter, sans-serif; fill: #111; }
  .visa-s { font: italic 800 10px 'Open Sans', sans-serif; fill: #0e4f97; }
  .visa { font: italic 800 34px 'Open Sans', sans-serif; fill: #fff; }
  .union { font: italic 700 11px 'Open Sans', sans-serif; fill: #fff; }
  .union-cn { font: 700 12px 'Noto Sans CJK SC', sans-serif; fill: #fff; }
  .flexe { font: 24px 'Open Sans', sans-serif; fill: #c9c9cb; }
  .red { fill: #d8232f; font-style: italic; font-weight: 700; }
  .flexe-sub { font: 7px 'Liberation Sans', sans-serif; fill: #b9b9bb; }
  .mif { font: 800 12px Lato, sans-serif; fill: #fff; }
  .inst { font: 700 13px Inter, sans-serif; fill: #fff; }
  .uber { font: 13px Inter, sans-serif; fill: #fff; }
  .jeton { font: 700 29px Inter, sans-serif; fill: #fff; }
  .bin { font: 600 30px Inter, sans-serif; }
  .binpay { font: 500 28px Inter, sans-serif; fill: #fff; }
  .coin { font: 700 17px 'DejaVu Sans', sans-serif; fill: #21c3c0; }
  .cr1 { font: 700 11px Lato, sans-serif; fill: #25abc0; }
  .cr2 { font: 700 8px Lato, sans-serif; fill: #2685c0; }

  footer { display: flex; padding: 58px 120px 40px 114px; background: #131315; }
  .logo-big { width: 120px; height: 53px; }
  .cols { flex: 1; display: grid; grid-template-columns: repeat(3, 1fr); column-gap: 36px; margin: 0 68px 0 64px; letter-spacing: 0.05em; }
  ul { list-style: none; margin: 0; padding: 0; display: flex; flex-direction: column; gap: 24px; }
  .apps { color: #8d8d8f; }
  p { margin: 0; }
  .stores { display: flex; gap: 12px; margin: 16px 0 32px; }
  .stores a { display: flex; align-items: center; justify-content: center; gap: 8px; width: 165px; height: 64px; border-radius: 8px; background: #fff; color: #000; font-size: 12px; font-weight: 600; line-height: 18px; }
  .stores svg { width: 26px; height: 30px; }
  .stores strong { display: block; font-size: 18px; font-weight: 700; line-height: 24px; }
  .social { display: flex; gap: 12px; margin-top: 16px; }
  .social a { display: grid; place-items: center; width: 64px; height: 64px; border-radius: 8px; background: #000; }
  .social svg { width: 36px; height: 36px; }
  .social-line { stroke-width: 3; }
  .chat { position: fixed; right: 28px; bottom: 86px; }
  .chat svg { width: 60px; height: 60px; }
  .chat text { font: 700 13px 'Open Sans', sans-serif; fill: #fff; }
</style>
